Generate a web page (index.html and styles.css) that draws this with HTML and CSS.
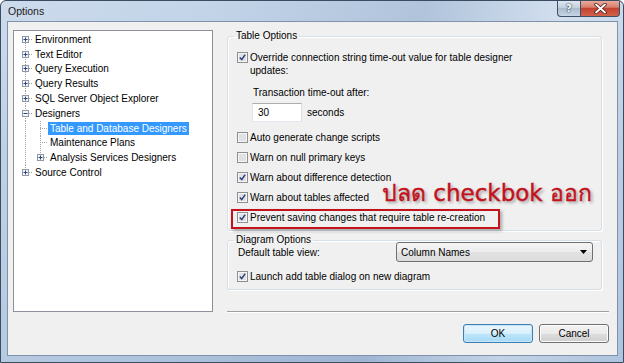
FILE: index.html
```html
<!DOCTYPE html>
<html>

<head>
  <title>Options</title>
  <link rel="stylesheet" href="styles.css">
</head>

<body>
  <div class="window">
    <div class="titlebar">
      <span class="title">Options</span>
      <div class="caption-buttons">
        <button class="cap-btn help">?</button>
        <button class="cap-btn close">
          <svg width="13" height="11" viewBox="0 0 13 11">
            <path d="M2 1.5l9 8M11 1.5l-9 8" stroke="#4a1b14" stroke-width="3.4" stroke-linecap="round" />
            <path d="M2 1.5l9 8M11 1.5l-9 8" stroke="#fff" stroke-width="1.8" stroke-linecap="round" />
          </svg>
        </button>
      </div>
    </div>

    <div class="frame">
      <div class="client">
        <div class="main">
          <!-- options tree -->
          <div class="tree">
            <div class="node">
              <span class="tw first"><svg class="exp" width="7" height="7" viewBox="0 0 7 7"><rect x=".5" y=".5" width="6" height="6" fill="#f3f5f8" stroke="#8f99a5"/><path d="M1.5 3.5h4M3.5 1.5v4" stroke="#2a4582"/></svg></span>
              <span class="label">Environment</span>
            </div>
            <div class="node">
              <span class="tw mid"><svg class="exp" width="7" height="7" viewBox="0 0 7 7"><rect x=".5" y=".5" width="6" height="6" fill="#f3f5f8" stroke="#8f99a5"/><path d="M1.5 3.5h4M3.5 1.5v4" stroke="#2a4582"/></svg></span>
              <span class="label">Text Editor</span>
            </div>
            <div class="node">
              <span class="tw mid"><svg class="exp" width="7" height="7" viewBox="0 0 7 7"><rect x=".5" y=".5" width="6" height="6" fill="#f3f5f8" stroke="#8f99a5"/><path d="M1.5 3.5h4M3.5 1.5v4" stroke="#2a4582"/></svg></span>
              <span class="label">Query Execution</span>
            </div>
            <div class="node">
              <span class="tw mid"><svg class="exp" width="7" height="7" viewBox="0 0 7 7"><rect x=".5" y=".5" width="6" height="6" fill="#f3f5f8" stroke="#8f99a5"/><path d="M1.5 3.5h4M3.5 1.5v4" stroke="#2a4582"/></svg></span>
              <span class="label">Query Results</span>
            </div>
            <div class="node">
              <span class="tw mid"><svg class="exp" width="7" height="7" viewBox="0 0 7 7"><rect x=".5" y=".5" width="6" height="6" fill="#f3f5f8" stroke="#8f99a5"/><path d="M1.5 3.5h4M3.5 1.5v4" stroke="#2a4582"/></svg></span>
              <span class="label">SQL Server Object Explorer</span>
            </div>
            <div class="node">
              <span class="tw mid"><svg class="exp" width="7" height="7" viewBox="0 0 7 7"><rect x=".5" y=".5" width="6" height="6" fill="#f3f5f8" stroke="#8f99a5"/><path d="M1.5 3.5h4" stroke="#2a4582"/></svg></span>
              <span class="label">Designers</span>
            </div>
            <div class="node">
              <span class="tw pass"></span>
              <span class="tw mid"></span>
              <span class="label selected">Table and Database Designers</span>
            </div>
            <div class="node">
              <span class="tw pass"></span>
              <span class="tw mid"></span>
              <span class="label">Maintenance Plans</span>
            </div>
            <div class="node">
              <span class="tw pass"></span>
              <span class="tw last"><svg class="exp" width="7" height="7" viewBox="0 0 7 7"><rect x=".5" y=".5" width="6" height="6" fill="#f3f5f8" stroke="#8f99a5"/><path d="M1.5 3.5h4M3.5 1.5v4" stroke="#2a4582"/></svg></span>
              <span class="label">Analysis Services Designers</span>
            </div>
            <div class="node">
              <span class="tw last"><svg class="exp" width="7" height="7" viewBox="0 0 7 7"><rect x=".5" y=".5" width="6" height="6" fill="#f3f5f8" stroke="#8f99a5"/><path d="M1.5 3.5h4M3.5 1.5v4" stroke="#2a4582"/></svg></span>
              <span class="label">Source Control</span>
            </div>
          </div>

          <div class="pane">
            <fieldset class="group table-options">
              <legend>Table Options</legend>
              <div class="option multi">
                <svg class="check" width="11" height="11" viewBox="0 0 11 11"><rect x=".5" y=".5" width="10" height="10" fill="#f6f6f6" stroke="#8e8f8f"/><rect x="2" y="2" width="7" height="7" fill="#dfe1e5"/><path d="M2.8 5.6l1.9 2 3.5-5" fill="none" stroke="#2c3f7a" stroke-width="1.5"/></svg>
                <span>Override connection string time-out value for table designer<br>updates:</span>
              </div>
              <div class="timeout">
                <div class="timeout-label">Transaction time-out after:</div>
                <div class="timeout-row">
                  <span class="textbox">30</span>
                  <span class="unit">seconds</span>
                </div>
              </div>
              <div class="option first">
                <svg class="check" width="11" height="11" viewBox="0 0 11 11"><rect x=".5" y=".5" width="10" height="10" fill="#f6f6f6" stroke="#8e8f8f"/><rect x="2" y="2" width="7" height="7" fill="#dfe1e5"/></svg>
                <span>Auto generate change scripts</span>
              </div>
              <div class="option">
                <svg class="check" width="11" height="11" viewBox="0 0 11 11"><rect x=".5" y=".5" width="10" height="10" fill="#f6f6f6" stroke="#8e8f8f"/><rect x="2" y="2" width="7" height="7" fill="#dfe1e5"/></svg>
                <span>Warn on null primary keys</span>
              </div>
              <div class="option">
                <svg class="check" width="11" height="11" viewBox="0 0 11 11"><rect x=".5" y=".5" width="10" height="10" fill="#f6f6f6" stroke="#8e8f8f"/><rect x="2" y="2" width="7" height="7" fill="#dfe1e5"/><path d="M2.8 5.6l1.9 2 3.5-5" fill="none" stroke="#2c3f7a" stroke-width="1.5"/></svg>
                <span>Warn about difference detection</span>
              </div>
              <div class="option">
                <svg class="check" width="11" height="11" viewBox="0 0 11 11"><rect x=".5" y=".5" width="10" height="10" fill="#f6f6f6" stroke="#8e8f8f"/><rect x="2" y="2" width="7" height="7" fill="#dfe1e5"/><path d="M2.8 5.6l1.9 2 3.5-5" fill="none" stroke="#2c3f7a" stroke-width="1.5"/></svg>
                <span>Warn about tables affected</span>
              </div>
              <div class="option flagged">
                <svg class="check" width="11" height="11" viewBox="0 0 11 11"><rect x=".5" y=".5" width="10" height="10" fill="#f6f6f6" stroke="#8e8f8f"/><rect x="2" y="2" width="7" height="7" fill="#dfe1e5"/><path d="M2.8 5.6l1.9 2 3.5-5" fill="none" stroke="#2c3f7a" stroke-width="1.5"/></svg>
                <span>Prevent saving changes that require table re-creation</span>
              </div>
              <div class="note">ปลด checkbok ออก</div>
            </fieldset>

            <fieldset class="group diagram-options">
              <legend>Diagram Options</legend>
              <div class="view-row">
                <span>Default table view:</span>
                <div class="combo">
                  <span>Column Names</span>
                  <svg width="7" height="4" viewBox="0 0 7 4"><path d="M0 0h7L3.5 4z" fill="#000"/></svg>
                </div>
              </div>
              <div class="option launch">
                <svg class="check" width="11" height="11" viewBox="0 0 11 11"><rect x=".5" y=".5" width="10" height="10" fill="#f6f6f6" stroke="#8e8f8f"/><rect x="2" y="2" width="7" height="7" fill="#dfe1e5"/><path d="M2.8 5.6l1.9 2 3.5-5" fill="none" stroke="#2c3f7a" stroke-width="1.5"/></svg>
                <span>Launch add table dialog on new diagram</span>
              </div>
            </fieldset>

            <div class="separator"></div>
          </div>
        </div>

        <div class="footer">
          <button class="btn default">OK</button>
          <button class="btn">Cancel</button>
        </div>
      </div>
    </div>
  </div>
</body>

</html>
```

FILE: styles.css
```css
html,
body {
  margin: 0;
  padding: 0;
}

body {
  font-family: "Liberation Sans", Arial, sans-serif;
  font-size: 10px;
  color: #000;
  background-color: #fff;
  --dot-v: repeating-linear-gradient(to bottom, #a3a3a3 0 1px, transparent 1px 2px);
  --dot-h: repeating-linear-gradient(to right, #a3a3a3 0 1px, transparent 1px 2px);
}

/* window chrome */
.window {
  width: 624px;
  height: 363px;
  box-sizing: border-box;
  border: 1px solid #3a4c62;
  border-radius: 6px 6px 0 0;
  display: flex;
  flex-direction: column;
  overflow: hidden;
  background:
    linear-gradient(100deg, rgba(255, 255, 255, 0.15) 0%, rgba(255, 255, 255, 0) 30%, rgba(90, 120, 160, 0.18) 62%, rgba(255, 255, 255, 0.25) 82%, rgba(255, 255, 255, 0) 100%),
    linear-gradient(#c4d5e9, #b6cae2 40%, #aec4de);
}

.titlebar {
  height: 20px;
  flex: none;
  display: flex;
  justify-content: space-between;
  align-items: flex-start;
  padding: 0 3px 0 7px;
}

.title {
  font-size: 10.5px;
  line-height: 21px;
  color: #1b1b1b;
}

.caption-buttons {
  display: flex;
  margin-top: -1px;
}

.cap-btn {
  height: 17px;
  padding: 0;
  border: 1px solid #3e4f66;
  border-top: none;
  display: flex;
  align-items: center;
  justify-content: center;
  cursor: default;
}

.help {
  width: 23px;
  border-right: none;
  border-radius: 0 0 0 4px;
  background: linear-gradient(#e3eaf2, #c3d0de 48%, #a9bbcf 52%, #c7d5e4);
  font-family: "DejaVu Sans", sans-serif;
  font-weight: bold;
  font-size: 10px;
  color: #fff;
  text-shadow: 0 0 2px #24364e, 0 0 1px #24364e;
}

.close {
  width: 40px;
  border-radius: 0 0 4px 0;
  background: linear-gradient(#eab0a3, #d9806d 45%, #c2412f 52%, #d4634c);
}

.frame {
  flex: 1;
  display: flex;
  min-height: 0;
  padding: 0 5px 6px 6px;
}

.client {
  flex: 1;
  display: flex;
  flex-direction: column;
  background-color: #f0f0f0;
  border: 1px solid #8092a9;
  padding: 8px 8px 12px 5px;
}

.main {
  display: flex;
  gap: 14px;
  height: 282px;
}

/* tree */
.tree {
  width: 200px;
  flex: none;
  box-sizing: border-box;
  border: 1px solid #8d9199;
  background-color: #fff;
  padding: 1px 0 0 4px;
}

.node {
  display: flex;
  height: 14.8px;
}

.tw {
  width: 15px;
  flex: none;
  display: flex;
  align-items: center;
  justify-content: center;
  background-repeat: no-repeat;
}

.tw.first {
  background-image: var(--dot-v), var(--dot-h);
  background-size: 1px 50%, 8px 1px;
  background-position: 7px 100%, 7px 50%;
}

.tw.mid {
  background-image: var(--dot-v), var(--dot-h);
  background-size: 1px 100%, 8px 1px;
  background-position: 7px 0, 7px 50%;
}

.tw.last {
  background-image: var(--dot-v), var(--dot-h);
  background-size: 1px 50%, 8px 1px;
  background-position: 7px 0, 7px 50%;
}

.tw.pass {
  background-image: var(--dot-v);
  background-size: 1px 100%;
  background-position: 7px 0;
}

.exp {
  display: block;
}

.label {
  align-self: center;
  line-height: 13px;
  padding: 0 2px;
  white-space: nowrap;
}

.label.selected {
  background-color: #3399ff;
  color: #fff;
}

/* right pane */
.pane {
  flex: 1;
  display: flex;
  flex-direction: column;
}

.group {
  margin: 0 7px 0 0;
  min-width: 0;
  border: 1px solid #d5dfe5;
  border-radius: 3px;
  padding: 0 8px 3px 9px;
  box-shadow: inset 1px 1px 0 #fff, 1px 1px 0 #fff;
}

.group legend {
  padding: 0 2px;
  margin-left: -3px;
  line-height: 12px;
}

.table-options {
  position: relative;
}

.diagram-options {
  margin-top: 3px;
}

.option {
  display: flex;
  align-items: center;
  gap: 2px;
  height: 20px;
  white-space: nowrap;
}

.option.multi {
  height: auto;
  align-items: flex-start;
  line-height: 13px;
  margin-top: 9px;
}

.option.multi .check {
  margin-top: 1px;
}

.option.first {
  margin-top: 5px;
}

.check {
  display: block;
  flex: none;
}

.timeout {
  margin-top: 9px;
  padding-left: 15px;
  line-height: 13px;
}

.timeout-label {
  margin-left: 1px;
}

.timeout-row {
  display: flex;
  align-items: center;
  margin-top: 4px;
}

.textbox {
  width: 50px;
  height: 19px;
  box-sizing: border-box;
  border: 1px solid;
  border-color: #abadb3 #dbdfe6 #e3e9ef #e2e3ea;
  background-color: #fff;
  padding-left: 5px;
  line-height: 17px;
}

.unit {
  margin-left: 5px;
}

/* red annotation drawn over the screenshot */
.flagged {
  position: relative;
}

.flagged::after {
  content: "";
  position: absolute;
  left: -6px;
  top: 2px;
  width: 269px;
  height: 20px;
  box-sizing: border-box;
  border: 2px solid #c3121c;
  box-shadow: 2px 2px 3px rgba(0, 0, 0, 0.3);
}

.note {
  position: absolute;
  left: 154px;
  top: 140px;
  font-family: "DejaVu Sans", "Noto Sans", sans-serif;
  font-size: 23px;
  line-height: 23px;
  color: #c3121c;
  white-space: nowrap;
  -webkit-text-stroke: 0.4px #c3121c;
  text-shadow: 2px 2px 3px rgba(0, 0, 0, 0.35);
}

.view-row {
  display: flex;
  align-items: center;
  height: 20px;
  margin-top: -4px;
  padding-left: 1px;
}

.combo {
  width: 197px;
  height: 20px;
  margin-left: auto;
  box-sizing: border-box;
  border: 1px solid #707070;
  border-radius: 3px;
  background: linear-gradient(#f4f4f4, #ececec 50%, #e2e2e2 51%, #dcdcdc);
  display: flex;
  align-items: center;
  justify-content: space-between;
  padding: 0 5px 0 4px;
}

.option.launch {
  margin-top: 4px;
}

.separator {
  margin-top: auto;
  height: 1px;
  background-color: #a0a0a0;
  box-shadow: 0 1px 0 #fff;
}

/* dialog buttons */
.footer {
  display: flex;
  justify-content: flex-end;
  gap: 6px;
  margin-top: 12px;
}

.btn {
  width: 70px;
  height: 19px;
  padding: 0;
  font-family: inherit;
  font-size: 10px;
  color: #000;
  border: 1px solid #707070;
  border-radius: 3px;
  background: linear-gradient(#f2f2f2, #ebebeb 50%, #dddddd 51%, #cfcfcf);
  box-shadow: inset 0 0 0 1px #fcfcfc;
}

.btn.default {
  border-color: #3c7fb1;
  background: linear-gradient(#eaf6fd, #d9f0fc 50%, #bee6fd 51%, #a7d9f5);
  box-shadow: inset 0 0 0 1px #c6e7fa;
}
```
